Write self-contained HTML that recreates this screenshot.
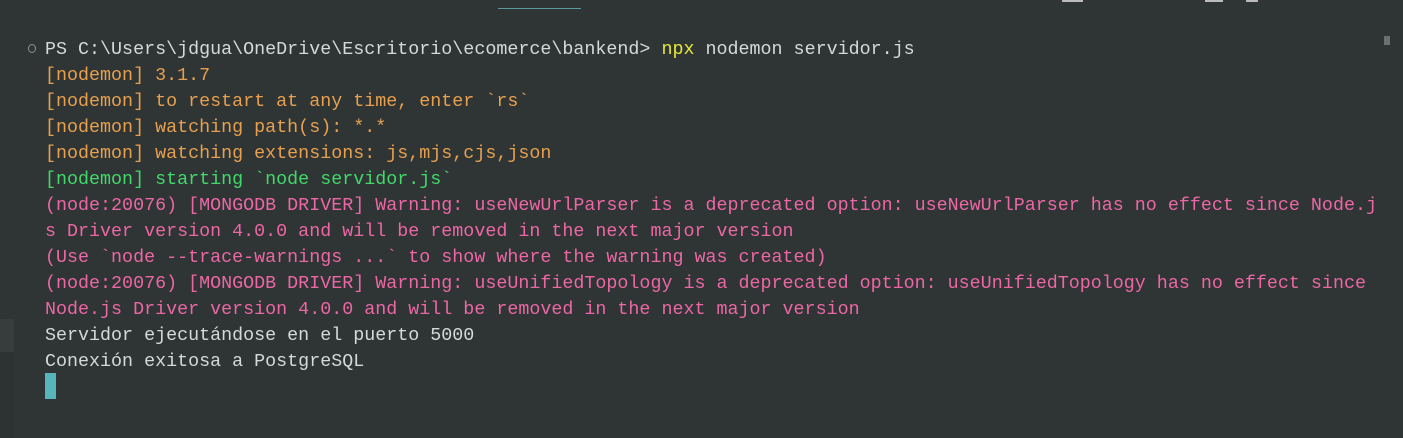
<!DOCTYPE html>
<html><head><meta charset="utf-8"><style>
html,body{margin:0;padding:0;}
body{width:1403px;height:438px;background:#2f3435;position:relative;overflow:hidden;font-family:"Liberation Mono",monospace;font-size:18.35px;}
.l{position:absolute;left:45px;height:26px;line-height:28px;white-space:pre;color:#d6d9d9;}
.o{color:#e7a04e}.g{color:#41d96a}.p{color:#ec67a4}.y{color:#e6e63a}
</style></head><body>
<div style="position:absolute;left:498px;top:8px;width:83px;height:1px;background:#5a9a9a"></div>
<div style="position:absolute;left:1062px;top:0;width:21px;height:2px;background:#bbb"></div>
<div style="position:absolute;left:1205px;top:0;width:18px;height:2px;background:#bbb"></div>
<div style="position:absolute;left:1246px;top:0;width:12px;height:2px;background:#bbb"></div>
<div style="position:absolute;left:1384px;top:36px;width:6px;height:9px;background:#6a6f70"></div>
<div style="position:absolute;left:0;top:319px;width:14px;height:33px;background:#373d3d"></div>
<div style="position:absolute;left:0;top:352px;width:14px;height:86px;background:#2d3232"></div>
<div style="position:absolute;left:28px;top:44px;width:6px;height:7px;border:1.5px solid #8a8f90;border-radius:50%"></div>
<div class="l" style="top:36px">PS C:\Users\jdgua\OneDrive\Escritorio\ecomerce\bankend&gt; <span class="y">npx</span> nodemon servidor.js</div>
<div class="l o" style="top:62px">[nodemon] 3.1.7</div>
<div class="l o" style="top:88px">[nodemon] to restart at any time, enter `rs`</div>
<div class="l o" style="top:114px">[nodemon] watching path(s): *.*</div>
<div class="l o" style="top:140px">[nodemon] watching extensions: js,mjs,cjs,json</div>
<div class="l g" style="top:166px">[nodemon] starting `node servidor.js`</div>
<div class="l p" style="top:192px">(node:20076) [MONGODB DRIVER] Warning: useNewUrlParser is a deprecated option: useNewUrlParser has no effect since Node.j</div>
<div class="l p" style="top:218px">s Driver version 4.0.0 and will be removed in the next major version</div>
<div class="l p" style="top:244px">(Use `node --trace-warnings ...` to show where the warning was created)</div>
<div class="l p" style="top:270px">(node:20076) [MONGODB DRIVER] Warning: useUnifiedTopology is a deprecated option: useUnifiedTopology has no effect since</div>
<div class="l p" style="top:296px">Node.js Driver version 4.0.0 and will be removed in the next major version</div>
<div class="l" style="top:322px">Servidor ejecutándose en el puerto 5000</div>
<div class="l" style="top:348px">Conexión exitosa a PostgreSQL</div>
<div style="position:absolute;left:45px;top:373px;width:11px;height:26px;background:#56b6b9"></div>
</body></html>
